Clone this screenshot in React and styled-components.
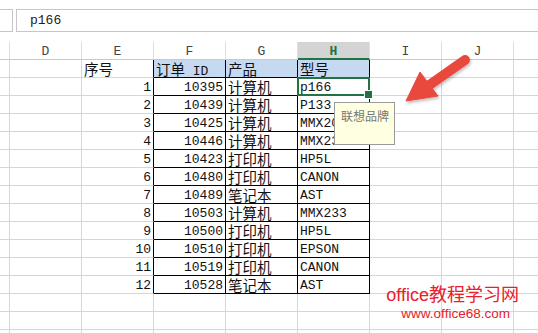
import React from 'react'
import styled, { createGlobalStyle } from 'styled-components'

const GlobalStyle = createGlobalStyle`
  html, body {
    margin: 0;
    padding: 0;
    background: #fff;
  }
  body {
    width: 538px;
    height: 333px;
    overflow: hidden;
  }
  * {
    box-sizing: border-box;
  }
`

const Page = styled.div`
  position: relative;
  width: 538px;
  height: 333px;
  overflow: hidden;
  background: #fff;
`

const FormulaBar = styled.div`
  display: flex;
  gap: 3px;
  height: 42px;
  padding: 9px 0 10px;
`

const NameBox = styled.div`
  width: 13px;
  border: 1px solid #c6c6c6;
  border-left: none;
`

const FormulaInput = styled.div`
  flex: 1;
  border: 1px solid #c6c6c6;
  border-right: none;
  padding-left: 13px;
  color: #222;
  font: 13px "Liberation Mono", monospace;
  line-height: 21px;
`

const Sheet = styled.div`
  display: grid;
  grid-template-columns: 10px repeat(8, 72px);
  grid-auto-rows: 18px;
`

const ColHead = styled.div`
  border-right: 1px solid #e0e0e0;
  border-bottom: ${p => (p.$active ? '2px solid #217346' : '1px solid #c8c8c8')};
  background: ${p => (p.$active ? '#d4d4d4' : '#fff')};
  color: ${p => (p.$active ? '#217346' : '#444')};
  font-family: "Liberation Mono", monospace;
  font-size: 13px;
  font-weight: ${p => (p.$active ? 700 : 400)};
  line-height: 19px;
  text-align: center;
`

const Cell = styled.div`
  position: relative;
  padding: 0 2px;
  border-right: 1px solid ${p => (p.$edgeR ? '#000' : '#d6d6d6')};
  border-bottom: 1px solid ${p => (p.$edgeB ? '#000' : '#d6d6d6')};
  background: ${p => (p.$fill ? '#c5d9f1' : '#fff')};
  color: #111;
  font-family: ${p => (p.$mono ? '"Liberation Mono", monospace' : '"Noto Sans CJK SC", sans-serif')};
  font-size: ${p => (p.$mono ? '13px' : '14.5px')};
  line-height: ${p => (p.$mono ? '19px' : '17px')};
  text-align: ${p => p.$align || 'left'};
  white-space: nowrap;

  ${p => p.$selected && `
    &::after {
      content: '';
      position: absolute;
      top: -1px;
      left: -1px;
      right: -1px;
      bottom: -1px;
      border: 2px solid #217346;
      z-index: 2;
    }
    &::before {
      content: '';
      position: absolute;
      right: -4px;
      bottom: -4px;
      width: 7px;
      height: 7px;
      background: #217346;
      border: 1px solid #fff;
      z-index: 3;
    }
  `}
`

const Latin = styled.span`
  font-family: "Liberation Mono", monospace;
  font-size: 13px;
`

const Tip = styled.div`
  position: absolute;
  left: 334px;
  top: 102px;
  width: 61px;
  height: 43px;
  padding: 4px 0 0 6px;
  background: #ffffe1;
  border: 1px solid #9a9a9a;
  color: #767676;
  font-family: "Noto Sans CJK SC", sans-serif;
  font-size: 12px;
  line-height: 18px;
  z-index: 4;
`

const Arrow = styled.svg`
  position: absolute;
  left: 0;
  top: 0;
  z-index: 5;
  pointer-events: none;
`

const Watermark = styled.div`
  position: absolute;
  right: 19px;
  top: 284px;
  display: flex;
  flex-direction: column;
  align-items: center;
  color: #e8202a;
  z-index: 5;
`

const MarkTitle = styled.div`
  font-family: "Liberation Sans", "Noto Sans CJK SC", sans-serif;
  font-size: 18px;
  line-height: 22px;
`

const MarkUrl = styled.div`
  font-family: "Liberation Sans", sans-serif;
  font-size: 13.5px;
  line-height: 16px;
  margin-left: 6px;
`

// K is only partly in view, its letter falls off the right edge
const cols = ['D', 'E', 'F', 'G', 'H', 'I', 'J', '']

const orders = [
  [10395, '计算机', 'p166'],
  [10439, '计算机', 'P133'],
  [10425, '计算机', 'MMX200'],
  [10446, '计算机', 'MMX233'],
  [10423, '打印机', 'HP5L'],
  [10480, '打印机', 'CANON'],
  [10489, '笔记本', 'AST'],
  [10503, '计算机', 'MMX233'],
  [10500, '打印机', 'HP5L'],
  [10510, '打印机', 'EPSON'],
  [10519, '打印机', 'CANON'],
  [10528, '笔记本', 'AST']
]

const TOTAL_ROWS = 16
// table occupies columns F..H (index 2..4) and rows 0..12
const inTable = (r, c) => r >= 0 && r <= 12 && c >= 2 && c <= 4

function cellContent(r, c) {
  if (r === 0) {
    if (c === 1) return { text: '序号' }
    if (c === 2) return { text: <>订单<Latin> ID</Latin></>, fill: true }
    if (c === 3) return { text: '产品', fill: true }
    if (c === 4) return { text: '型号', fill: true }
    return {}
  }
  const row = orders[r - 1]
  if (!row) return {}
  if (c === 1) return { text: r, mono: true, align: 'right' }
  if (c === 2) return { text: row[0], mono: true, align: 'right' }
  if (c === 3) return { text: row[1] }
  if (c === 4) return { text: row[2], mono: true }
  return {}
}

export default function App() {
  const rows = []
  for (let r = 0; r < TOTAL_ROWS; r++) {
    rows.push(<Cell key={`h${r}`} />)
    cols.forEach((_, c) => {
      const info = cellContent(r, c)
      const edgeR = inTable(r, c) || inTable(r, c + 1)
      const edgeB = inTable(r, c) || inTable(r + 1, c)
      rows.push(
        <Cell
          key={`${r}-${c}`}
          $edgeR={edgeR}
          $edgeB={edgeB}
          $fill={info.fill}
          $mono={info.mono}
          $align={info.align}
          $selected={r === 1 && c === 4}
        >
          {info.text}
        </Cell>
      )
    })
  }

  return (
    <Page>
      <GlobalStyle />
      <FormulaBar>
        <NameBox />
        <FormulaInput>p166</FormulaInput>
      </FormulaBar>
      <Sheet>
        <ColHead />
        {cols.map((c, i) => (
          <ColHead key={i} $active={c === 'H'}>{c}</ColHead>
        ))}
        {rows}
      </Sheet>

      <Tip>联想品牌</Tip>

      <Arrow width="538" height="333" viewBox="0 0 538 333">
        <defs>
          <filter id="shade" x="-20%" y="-20%" width="140%" height="140%">
            <feDropShadow dx="1" dy="2" stdDeviation="1.5" floodColor="#000" floodOpacity="0.25" />
          </filter>
        </defs>
        <g filter="url(#shade)" fill="#e9493e" stroke="#e9493e">
          <line x1="465" y1="60" x2="428" y2="86" strokeWidth="10" strokeLinecap="round" />
          <polygon points="406,101 420,72 438,96" strokeWidth="1" strokeLinejoin="round" />
        </g>
      </Arrow>

      <Watermark>
        <MarkTitle>office教程学习网</MarkTitle>
        <MarkUrl>www.office68.com</MarkUrl>
      </Watermark>
    </Page>
  )
}
